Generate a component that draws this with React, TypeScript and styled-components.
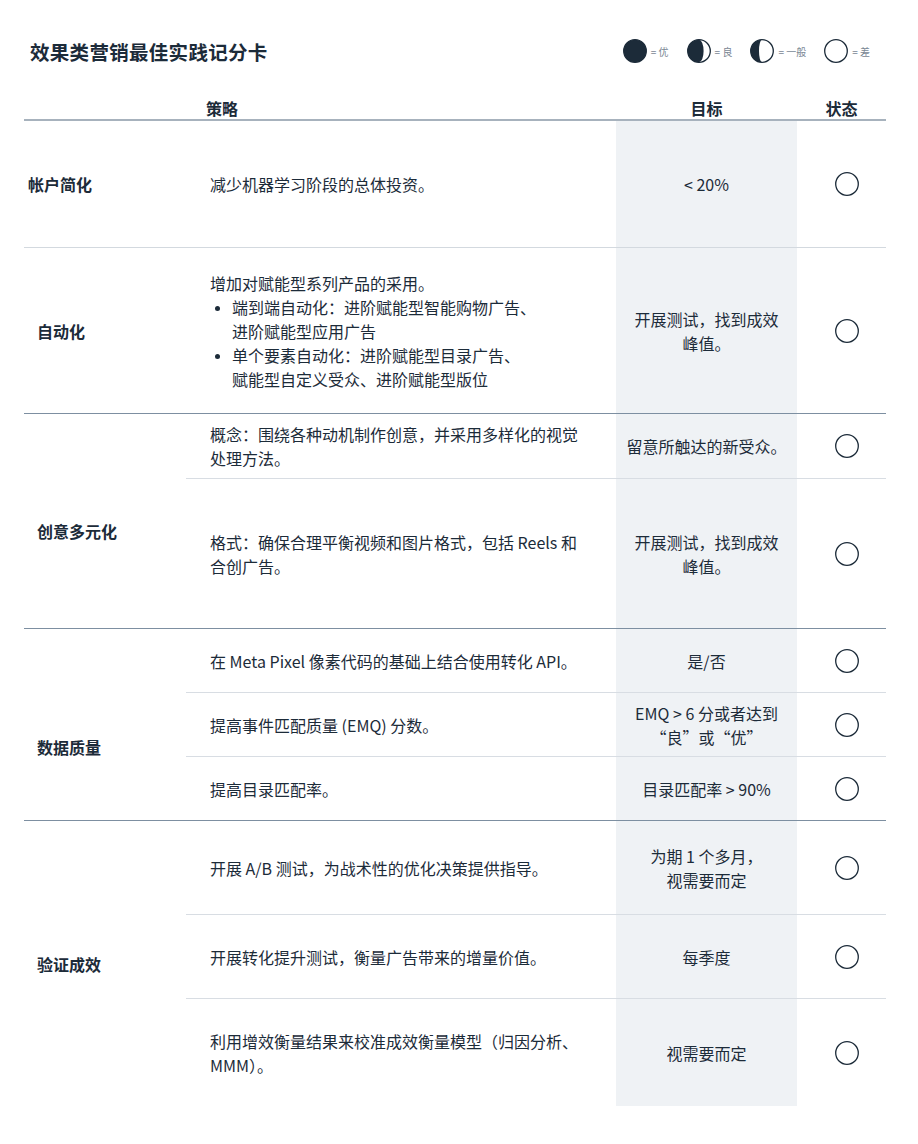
import React from 'react';
import styled, { createGlobalStyle } from 'styled-components';

const INK = '#1c2b39';
const SHADE = '#eff2f5';

const GlobalStyle = createGlobalStyle`
  body {
    margin: 0;
    background: #fff;
    font-family: 'Noto Sans CJK SC', 'Noto Sans', sans-serif;
    color: ${INK};
  }
`;

const Page = styled.div`
  width: 862px;
  padding: 0 32px 38px 24px;
`;

const TitleBar = styled.div`
  display: flex;
  align-items: center;
  justify-content: space-between;
  height: 46px;
  margin-top: 28px;
  padding: 0 16px 0 6px;
`;

const Title = styled.h1`
  margin: 0;
  font-size: 19.5px;
  font-weight: 700;
  letter-spacing: 0.3px;
`;

const Legend = styled.div`
  display: flex;
  align-items: center;
  gap: 18px;
`;

const LegendItem = styled.div`
  display: flex;
  align-items: center;
  gap: 4px;

  svg {
    display: block;
  }
`;

const LegendText = styled.span`
  font-size: 10px;
  color: #7a8794;
`;

const Header = styled.div`
  display: grid;
  grid-template-columns: 162px 430px 181px 89px;
  align-items: end;
  height: 47px;
  box-sizing: border-box;
  border-bottom: 2px solid #a7b2bd;
`;

const HeadCell = styled.div<{ $indent?: number; $center?: boolean }>`
  font-size: 16px;
  font-weight: 700;
  line-height: 22px;
  padding-left: ${p => p.$indent ?? 0}px;
  text-align: ${p => (p.$center ? 'center' : 'left')};
`;

const Group = styled.div<{ $first: boolean; $strong: boolean }>`
  display: flex;
  border-top: ${p => (p.$first ? 'none' : `1px solid ${p.$strong ? '#7d8fa1' : '#d3d9df'}`)};
`;

const GroupLabel = styled.div<{ $indent: number; $shift: number }>`
  width: 162px;
  flex-shrink: 0;
  display: flex;
  align-items: center;
  box-sizing: border-box;
  padding-left: ${p => p.$indent}px;
  padding-top: ${p => p.$shift}px;
  font-size: 16px;
  font-weight: 700;
`;

const Rows = styled.div`
  display: flex;
  flex-direction: column;
`;

const Row = styled.div<{ $divided: boolean }>`
  display: grid;
  grid-template-columns: 430px 181px 89px;
  box-sizing: border-box;
  border-top: ${p => (p.$divided ? '1px solid #d8dde3' : 'none')};
`;

const Strategy = styled.div`
  display: flex;
  flex-direction: column;
  justify-content: center;
  padding-left: 24px;
  font-size: 16px;
  line-height: 24px;
`;

const Bullets = styled.ul`
  margin: 0;
  padding-left: 22px;

  li::marker {
    font-size: 13px;
  }
`;

const Target = styled.div`
  display: flex;
  align-items: center;
  justify-content: center;
  background: ${SHADE};
  text-align: center;
  font-size: 16px;
  line-height: 24px;
`;

const Status = styled.div`
  display: flex;
  align-items: center;
  padding-left: 38px;

  svg {
    display: block;
  }
`;

type Rating = 'full' | 'good' | 'fair' | 'poor';

interface RowData {
  strategy: React.ReactNode;
  target: React.ReactNode;
  height: number;
}

interface GroupData {
  label: string;
  labelIndent: number;
  labelShift: number;
  strongLine: boolean;
  rows: RowData[];
}

const peak = (
  <>
    开展测试，找到成效
    <br />
    峰值。
  </>
);

const groups: GroupData[] = [
  {
    label: '帐户简化',
    labelIndent: 4,
    labelShift: 0,
    strongLine: false,
    rows: [{ strategy: '减少机器学习阶段的总体投资。', target: '< 20%', height: 126 }],
  },
  {
    label: '自动化',
    labelIndent: 13,
    labelShift: 0,
    strongLine: false,
    rows: [
      {
        strategy: (
          <>
            增加对赋能型系列产品的采用。
            <Bullets>
              <li>
                端到端自动化：进阶赋能型智能购物广告、
                <br />
                进阶赋能型应用广告
              </li>
              <li>
                单个要素自动化：进阶赋能型目录广告、
                <br />
                赋能型自定义受众、进阶赋能型版位
              </li>
            </Bullets>
          </>
        ),
        target: peak,
        height: 165,
      },
    ],
  },
  {
    label: '创意多元化',
    labelIndent: 13,
    labelShift: 20,
    strongLine: true,
    rows: [
      {
        strategy: (
          <>
            概念：围绕各种动机制作创意，并采用多样化的视觉
            <br />
            处理方法。
          </>
        ),
        target: '留意所触达的新受众。',
        height: 64,
      },
      {
        strategy: (
          <>
            格式：确保合理平衡视频和图片格式，包括 Reels 和
            <br />
            合创广告。
          </>
        ),
        target: peak,
        height: 150,
      },
    ],
  },
  {
    label: '数据质量',
    labelIndent: 13,
    labelShift: 44,
    strongLine: true,
    rows: [
      { strategy: '在 Meta Pixel 像素代码的基础上结合使用转化 API。', target: '是/否', height: 63 },
      {
        strategy: '提高事件匹配质量 (EMQ) 分数。',
        target: (
          <>
            EMQ &gt; 6 分或者达到
            <br />
            “良”或“优”
          </>
        ),
        height: 64,
      },
      { strategy: '提高目录匹配率。', target: '目录匹配率 > 90%', height: 64 },
    ],
  },
  {
    label: '验证成效',
    labelIndent: 13,
    labelShift: 0,
    strongLine: true,
    rows: [
      {
        strategy: '开展 A/B 测试，为战术性的优化决策提供指导。',
        target: (
          <>
            为期 1 个多月，
            <br />
            视需要而定
          </>
        ),
        height: 93,
      },
      { strategy: '开展转化提升测试，衡量广告带来的增量价值。', target: '每季度', height: 84 },
      {
        strategy: (
          <>
            利用增效衡量结果来校准成效衡量模型（归因分析、
            <br />
            MMM）。
          </>
        ),
        target: '视需要而定',
        height: 108,
      },
    ],
  },
];

const legend: { rating: Rating; text: string }[] = [
  { rating: 'full', text: '= 优' },
  { rating: 'good', text: '= 良' },
  { rating: 'fair', text: '= 一般' },
  { rating: 'poor', text: '= 差' },
];

const Moon = ({ rating }: { rating: Rating }) => (
  <svg width={24} height={24} viewBox='0 0 24 24'>
    <circle cx='12' cy='12' r='11.3' fill={rating === 'full' ? INK : '#fff'} stroke={INK} strokeWidth='1.3' />
    {rating === 'good' && <path d='M12 0.7 A11.3 11.3 0 0 0 12 23.3 A4.6 11.3 0 0 0 12 0.7 Z' fill={INK} />}
    {rating === 'fair' && <path d='M12 0.7 A11.3 11.3 0 0 0 12 23.3 A3 11.3 0 0 1 12 0.7 Z' fill={INK} />}
  </svg>
);

const App = () => (
  <Page>
    <GlobalStyle />
    <TitleBar>
      <Title>效果类营销最佳实践记分卡</Title>
      <Legend>
        {legend.map(item => (
          <LegendItem key={item.rating}>
            <Moon rating={item.rating} />
            <LegendText>{item.text}</LegendText>
          </LegendItem>
        ))}
      </Legend>
    </TitleBar>

    <Header>
      <HeadCell />
      <HeadCell $indent={20}>策略</HeadCell>
      <HeadCell $center>目标</HeadCell>
      <HeadCell $center>状态</HeadCell>
    </Header>

    {groups.map((group, gi) => (
      <Group key={group.label} $first={gi === 0} $strong={group.strongLine}>
        <GroupLabel $indent={group.labelIndent} $shift={group.labelShift}>
          {group.label}
        </GroupLabel>
        <Rows>
          {group.rows.map((row, ri) => (
            <Row key={ri} $divided={ri > 0} style={{ height: row.height }}>
              <Strategy>{row.strategy}</Strategy>
              <Target>{row.target}</Target>
              <Status>
                <Moon rating='poor' />
              </Status>
            </Row>
          ))}
        </Rows>
      </Group>
    ))}
  </Page>
);

export default App;
